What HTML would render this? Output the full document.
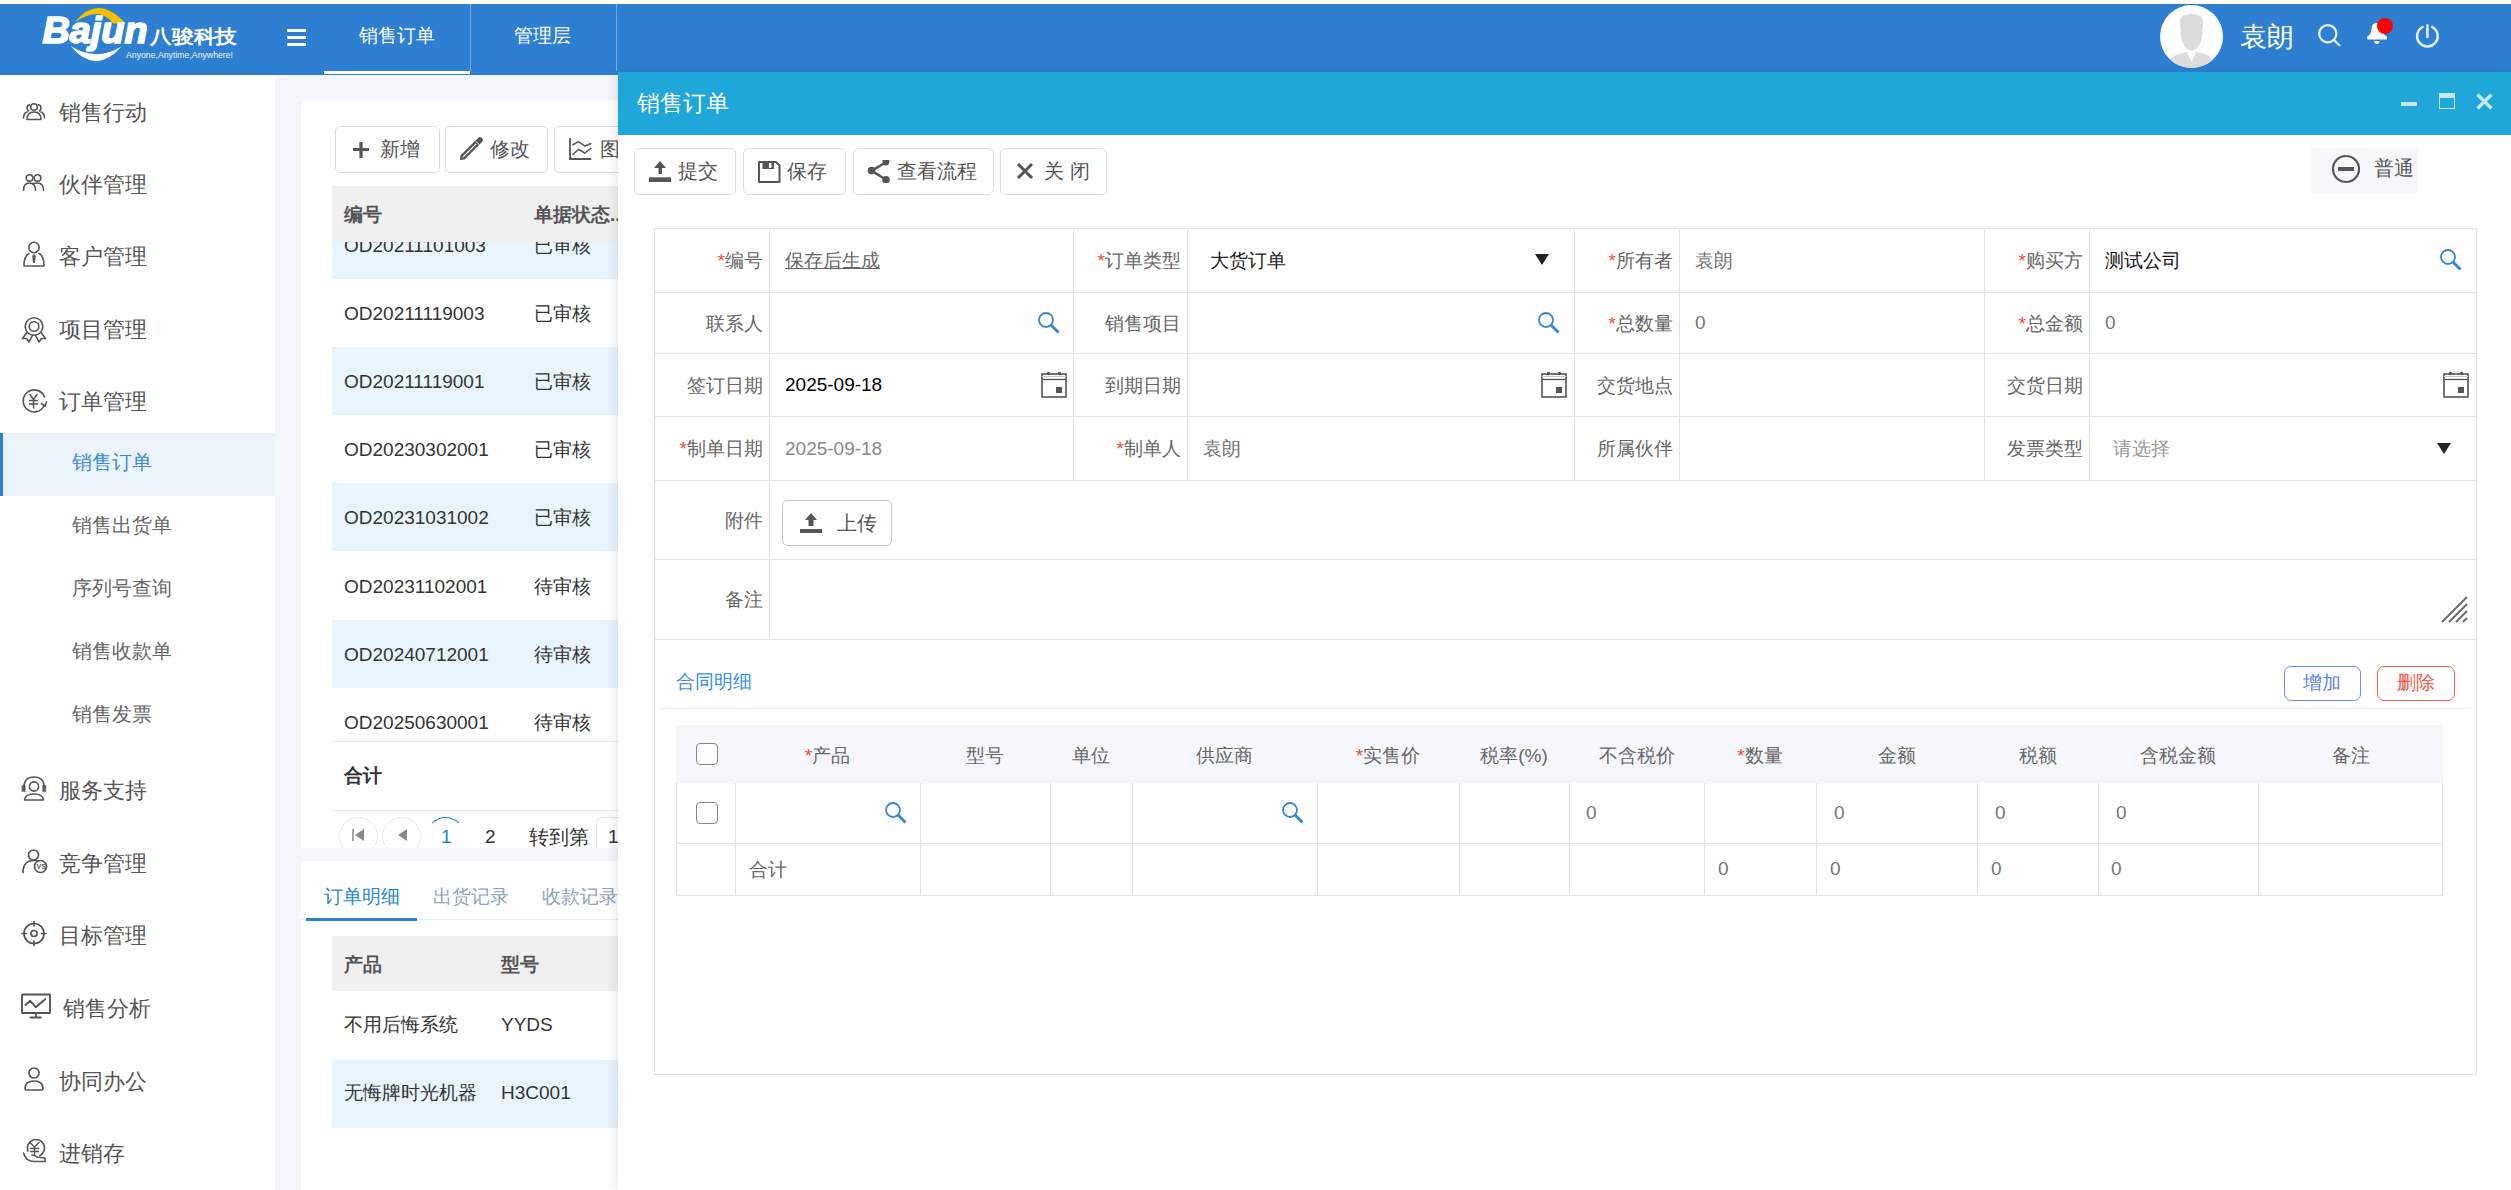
<!DOCTYPE html><html><head><meta charset="utf-8"><style>
html,body{margin:0;padding:0;width:2511px;height:1190px;overflow:hidden;background:#fff;font-family:"Liberation Sans", sans-serif;}
.r{position:absolute;box-sizing:border-box;}
.t{position:absolute;white-space:nowrap;}
</style></head><body>
<div class="r" style="left:0px;top:4px;width:2511px;height:71px;background:#2e7fd1"></div>
<svg class="r" style="left:0px;top:0px" width="260" height="75" viewBox="0 0 260 75">
<path d="M74.5 22.5 Q98 -7 125.6 23.5 L113 23.5 Q100 5 74.5 22.5 Z" fill="#f5c000"/>
<path d="M70.5 46 Q96 76 121.5 46.5 Q96 62 70.5 46 Z" fill="#fff"/>
<text x="42.5" y="43" font-family="Liberation Sans" font-weight="bold" font-style="italic" font-size="36" fill="#fff" stroke="#fff" stroke-width="1.6" textLength="105" lengthAdjust="spacingAndGlyphs">Bajun</text>
<text x="150" y="43" font-family="Liberation Sans" font-weight="bold" font-size="19" fill="#fff" textLength="87" lengthAdjust="spacingAndGlyphs">八骏科技</text>
<text x="126" y="58" font-family="Liberation Sans" font-size="9" fill="#f2f6fb" textLength="107" lengthAdjust="spacingAndGlyphs">Anyone,Anytime,Anywhere!</text>
</svg>
<div class="r" style="left:287px;top:29px;width:19px;height:2.5px;background:#fff"></div>
<div class="r" style="left:287px;top:36px;width:19px;height:2.5px;background:#fff"></div>
<div class="r" style="left:287px;top:43px;width:19px;height:2.5px;background:#fff"></div>
<div class="t " style="left:359px;top:17px;height:38px;line-height:38px;font-size:19px;color:#fff;font-weight:normal;">销售订单</div>
<div class="r" style="left:324px;top:71px;width:146px;height:3px;background:#fff"></div>
<div class="r" style="left:470px;top:4px;width:1px;height:67px;background:rgba(255,255,255,0.35)"></div>
<div class="t " style="left:514px;top:17px;height:38px;line-height:38px;font-size:19px;color:#fff;font-weight:normal;">管理层</div>
<div class="r" style="left:616px;top:4px;width:1px;height:67px;background:rgba(255,255,255,0.35)"></div>
<svg class="r" style="left:2160px;top:5px" width="63" height="63" viewBox="0 0 63 63">
<circle cx="31.5" cy="31.5" r="31.5" fill="#fff"/>
<clipPath id="avc"><circle cx="31.5" cy="31.5" r="31.5"/></clipPath>
<g clip-path="url(#avc)" fill="#dcdcdf">
<path d="M20 16 Q20 9 31.5 9 Q43 9 43 16 L42 32 Q40 44 31.5 46 Q23 44 21 32 Z"/>
<path d="M8 66 L10 56 Q12 50 22 48 L27 47 L31.5 57 L36 47 L41 48 Q51 50 53 56 L55 66 Z"/>
</g></svg>
<div class="t " style="left:2240px;top:10px;height:54px;line-height:54px;font-size:27px;color:#fff;font-weight:normal;">袁朗</div>
<svg class="r" style="left:2317px;top:23px" width="25" height="25" viewBox="0 0 25 25"><circle cx="10.8" cy="10.7" r="8.6" fill="none" stroke="#e8f0f8" stroke-width="2.3"/><line x1="17" y1="17" x2="23" y2="23" stroke="#e8f0f8" stroke-width="2.3"/></svg>
<svg class="r" style="left:2364px;top:18px" width="30" height="30" viewBox="0 0 30 30"><path d="M3.2 21.6 L23 21.6 L23 18.3 Q19.5 17.5 18.6 13 L18.2 10 Q17.6 5 12.8 5 Q8 5 7.6 10 L7.2 13 Q6.2 17.5 3.2 18.3 Z" fill="#fff"/><path d="M10.2 23 Q10.2 26 12.8 26 Q15.4 26 15.4 23 Z" fill="#fff"/><circle cx="21" cy="8" r="8" fill="#f00"/></svg>
<svg class="r" style="left:2414px;top:22px" width="26" height="26" viewBox="0 0 26 26"><path d="M8.6 5 A10.3 10.3 0 1 0 18.2 5" fill="none" stroke="#e8f0f8" stroke-width="2.5" stroke-linecap="round"/><line x1="13.4" y1="3.5" x2="13.4" y2="15" stroke="#e8f0f8" stroke-width="2.5" stroke-linecap="round"/></svg>
<div class="r" style="left:0px;top:75px;width:275px;height:1115px;background:#fff"></div>
<div class="t " style="left:59px;top:91px;height:44px;line-height:44px;font-size:22px;color:#555;font-weight:normal;">销售行动</div>
<div class="t " style="left:59px;top:163px;height:44px;line-height:44px;font-size:22px;color:#555;font-weight:normal;">伙伴管理</div>
<div class="t " style="left:59px;top:235px;height:44px;line-height:44px;font-size:22px;color:#555;font-weight:normal;">客户管理</div>
<div class="t " style="left:59px;top:308px;height:44px;line-height:44px;font-size:22px;color:#555;font-weight:normal;">项目管理</div>
<div class="t " style="left:59px;top:380px;height:44px;line-height:44px;font-size:22px;color:#555;font-weight:normal;">订单管理</div>
<div class="t " style="left:59px;top:769px;height:44px;line-height:44px;font-size:22px;color:#555;font-weight:normal;">服务支持</div>
<div class="t " style="left:59px;top:842px;height:44px;line-height:44px;font-size:22px;color:#555;font-weight:normal;">竞争管理</div>
<div class="t " style="left:59px;top:914px;height:44px;line-height:44px;font-size:22px;color:#555;font-weight:normal;">目标管理</div>
<div class="t " style="left:63px;top:987px;height:44px;line-height:44px;font-size:22px;color:#555;font-weight:normal;">销售分析</div>
<div class="t " style="left:59px;top:1060px;height:44px;line-height:44px;font-size:22px;color:#555;font-weight:normal;">协同办公</div>
<div class="t " style="left:59px;top:1132px;height:44px;line-height:44px;font-size:22px;color:#555;font-weight:normal;">进销存</div>
<svg class="r" style="left:22px;top:102px" width="24" height="19" viewBox="0 0 24 19"><g fill="none" stroke="#555" stroke-width="1.6" stroke-linecap="round" stroke-linejoin="round"><circle cx="12" cy="5" r="3.3"/><path d="M5 17.5 Q5 10 12 10 Q19 10 19 17.5 Z"/><path d="M7.5 2.8 Q5 3.2 5 6 Q5 8 6.5 9"/><path d="M16.5 2.8 Q19 3.2 19 6 Q19 8 17.5 9"/><path d="M1.5 16 Q1.5 11.5 5 10"/><path d="M22.5 16 Q22.5 11.5 19 10"/></g></svg>
<svg class="r" style="left:22px;top:173px" width="24" height="19" viewBox="0 0 24 19"><g fill="none" stroke="#555" stroke-width="1.6" stroke-linecap="round" stroke-linejoin="round"><circle cx="7.5" cy="5" r="3.3"/><circle cx="15.5" cy="5" r="3.3"/><path d="M1.5 17.5 Q1.5 10 7.5 10 Q13.5 10 13.5 17.5"/><path d="M11 10.6 Q13 10 15.5 10 Q21.5 10 21.5 17.5"/></g></svg>
<svg class="r" style="left:22px;top:241px" width="24" height="27" viewBox="0 0 24 27"><g fill="none" stroke="#555" stroke-width="1.6" stroke-linecap="round" stroke-linejoin="round"><circle cx="12" cy="6.5" r="5.2"/><path d="M7 12.5 Q2 15 2 25 L22 25 Q22 15 17 12.5"/><path d="M12 13.5 L13.2 15 L12.8 21 L12 22 L11.2 21 L10.8 15 Z" fill="#555" stroke-width="0.8"/></g></svg>
<svg class="r" style="left:21px;top:316px" width="26" height="27" viewBox="0 0 26 27"><g fill="none" stroke="#555" stroke-width="1.6" stroke-linecap="round" stroke-linejoin="round"><circle cx="13" cy="10.5" r="8.8"/><circle cx="13" cy="10.5" r="4.8"/><path d="M6 16.5 L1.5 22.5 L5.5 22.5 L8 26 L11.5 19.3"/><path d="M20 16.5 L24.5 22.5 L20.5 22.5 L18 26 L14.5 19.3"/></g></svg>
<svg class="r" style="left:21px;top:388px" width="27" height="26" viewBox="0 0 27 26"><g fill="none" stroke="#555" stroke-width="1.6" stroke-linecap="round" stroke-linejoin="round"><path d="M23.5 9 A11 11 0 1 0 23.2 17.5"/><path d="M20.5 15.5 L24 18.2 L25.5 14"/><path d="M9 6.5 L12.5 11.5 L16 6.5 M12.5 11.5 V20 M8.5 12.5 H16.5 M8.5 16 H16.5" stroke-width="1.5"/></g></svg>
<svg class="r" style="left:21px;top:775px" width="26" height="27" viewBox="0 0 26 27"><g fill="none" stroke="#555" stroke-width="1.6" stroke-linecap="round" stroke-linejoin="round"><path d="M3 12 Q3 2 13 2 Q23 2 23 12"/><rect x="1.2" y="10.5" width="3" height="6" fill="#555" stroke-width="0.5"/><rect x="21.8" y="10.5" width="3" height="6" fill="#555" stroke-width="0.5"/><circle cx="13" cy="11.5" r="4.6"/><path d="M3.5 25 Q4 19 13 19 Q22 19 22.5 25 Z"/></g></svg>
<svg class="r" style="left:21px;top:849px" width="27" height="26" viewBox="0 0 27 26"><g fill="none" stroke="#555" stroke-width="1.7" stroke-linecap="round" stroke-linejoin="round"><circle cx="12.5" cy="6" r="5"/><path d="M2 23.5 Q2 11.5 13 11.5 L16 11.5"/><circle cx="19.5" cy="17.5" r="6"/><text x="15.6" y="20" font-size="7" font-weight="bold" fill="#555" stroke="none" font-family="Liberation Sans">VS</text></g></svg>
<svg class="r" style="left:21px;top:921px" width="27" height="26" viewBox="0 0 27 26"><g fill="none" stroke="#555" stroke-width="1.7" stroke-linecap="round" stroke-linejoin="round"><circle cx="13" cy="12.5" r="10"/><circle cx="13" cy="12.5" r="3"/><path d="M13 0.5 V5 M13 20 V24.5 M1 12.5 H5.5 M20.5 12.5 H25"/></g></svg>
<svg class="r" style="left:21px;top:993px" width="31" height="27" viewBox="0 0 31 27"><g fill="none" stroke="#555" stroke-width="1.9" stroke-linecap="round" stroke-linejoin="round"><rect x="1" y="1.5" width="28" height="18.5" rx="0.5"/><path d="M4.5 12 L9.2 7.8 L14.8 14.2 L24.2 6.2"/><path d="M14.8 20 V24.5 M9.5 24.5 H20"/></g></svg>
<svg class="r" style="left:23px;top:1067px" width="22" height="24" viewBox="0 0 22 24"><g fill="none" stroke="#555" stroke-width="1.7" stroke-linecap="round" stroke-linejoin="round"><circle cx="11" cy="6" r="5"/><path d="M2 21.5 Q2 14 11 14 Q20 14 20 21.5 Q20 23 18.5 23 L3.5 23 Q2 23 2 21.5 Z"/></g></svg>
<svg class="r" style="left:22px;top:1138px" width="25" height="26" viewBox="0 0 25 26"><g fill="none" stroke="#555" stroke-width="1.7" stroke-linecap="round" stroke-linejoin="round"><path d="M6 13 A8.5 8.5 0 1 1 18 17.5"/><path d="M8 4.5 L12.5 9 L17 4.5 M12.5 9 V17 M8.5 10.5 H16.5 M8.5 13.5 H16.5" stroke-width="1.4"/><path d="M1.5 15 Q4 23.5 12 23.5 L23 23.5 L23 20 L15 19 Q13 17 10 17"/></g></svg>
<div class="r" style="left:0px;top:433px;width:275px;height:63px;background:#ebf3fb"></div>
<div class="r" style="left:0px;top:433px;width:3px;height:63px;background:#2e7fd1"></div>
<div class="t " style="left:72px;top:442px;height:40px;line-height:40px;font-size:20px;color:#3d8ad8;font-weight:normal;">销售订单</div>
<div class="t " style="left:72px;top:505px;height:40px;line-height:40px;font-size:20px;color:#666;font-weight:normal;">销售出货单</div>
<div class="t " style="left:72px;top:568px;height:40px;line-height:40px;font-size:20px;color:#666;font-weight:normal;">序列号查询</div>
<div class="t " style="left:72px;top:631px;height:40px;line-height:40px;font-size:20px;color:#666;font-weight:normal;">销售收款单</div>
<div class="t " style="left:72px;top:694px;height:40px;line-height:40px;font-size:20px;color:#666;font-weight:normal;">销售发票</div>
<div class="r" style="left:275px;top:75px;width:343px;height:1115px;background:#f4f6fb"></div>
<div class="r" style="left:301px;top:100px;width:330px;height:748px;background:#fff;border-radius:6px 0 0 0"></div>
<div class="r" style="left:335px;top:126px;width:104.5px;height:47px;border:1px solid #dcdcdc;border-radius:5px;background:#fff"></div>
<div class="r" style="left:445px;top:126px;width:103px;height:47px;border:1px solid #dcdcdc;border-radius:5px;background:#fff"></div>
<div class="r" style="left:554px;top:126px;width:106px;height:47px;border:1px solid #dcdcdc;border-radius:5px;background:#fff"></div>
<div class="t " style="left:380px;top:129px;height:40px;line-height:40px;font-size:20px;color:#555;font-weight:normal;">新增</div>
<div class="t " style="left:490px;top:129px;height:40px;line-height:40px;font-size:20px;color:#555;font-weight:normal;">修改</div>
<div class="t " style="left:600px;top:129px;height:40px;line-height:40px;font-size:20px;color:#555;font-weight:normal;">图表</div>
<svg class="r" style="left:352px;top:140.5px" width="18" height="18" viewBox="0 0 18 18"><path d="M9 1 V17 M1 8.5 H17" stroke="#555" stroke-width="3.2"/></svg>
<svg class="r" style="left:458px;top:136px" width="26" height="26" viewBox="0 0 26 26"><path d="M2.4 19.4 L17.4 4.4 L21.6 8.6 L6.6 23.6 Z" fill="#555"/><path d="M2.4 19.4 L2 24 L6.6 23.6 Z" fill="#555"/><line x1="5.2" y1="20.8" x2="18.2" y2="7.8" stroke="#fff" stroke-width="1.2"/><line x1="20.3" y1="5.7" x2="22" y2="4" stroke="#555" stroke-width="5.6" stroke-linecap="round"/><line x1="17" y1="4.4" x2="21.6" y2="9" stroke="#fff" stroke-width="0.9"/></svg>
<svg class="r" style="left:567px;top:137px" width="26" height="24" viewBox="0 0 26 24"><path d="M3 1 V22 H24.3" fill="none" stroke="#555" stroke-width="1.8"/><path d="M5.4 8 L11.5 4.7 L18 9.2 L24.3 6.2 M5.4 17.8 L11.7 12.5 L17.8 16 L24.3 11" fill="none" stroke="#555" stroke-width="1.5"/></svg>
<div class="r" style="left:332px;top:186px;width:300px;height:56px;background:#f0f0f0"></div>
<div class="t " style="left:344px;top:196px;height:38px;line-height:38px;font-size:19px;color:#555;font-weight:bold;">编号</div>
<div class="t " style="left:534px;top:196px;height:38px;line-height:38px;font-size:19px;color:#555;font-weight:bold;">单据状态..</div>
<div class="r" style="left:332px;top:242px;width:300px;height:499px;overflow:hidden">
<div class="r" style="left:0;top:0px;width:300px;height:36.69999999999999px;background:#e8f5fe"></div>
<div class="t" style="left:12px;top:-15.400000000000006px;line-height:38px;font-size:19px;color:#333">OD20211101003</div>
<div class="t" style="left:202px;top:-15.400000000000006px;line-height:38px;font-size:19px;color:#333">已审核</div>
<div class="t" style="left:12px;top:52.80000000000001px;line-height:38px;font-size:19px;color:#333">OD20211119003</div>
<div class="t" style="left:202px;top:52.80000000000001px;line-height:38px;font-size:19px;color:#333">已审核</div>
<div class="r" style="left:0;top:104.89999999999998px;width:300px;height:68.19999999999999px;background:#e8f5fe"></div>
<div class="t" style="left:12px;top:121.0px;line-height:38px;font-size:19px;color:#333">OD20211119001</div>
<div class="t" style="left:202px;top:121.0px;line-height:38px;font-size:19px;color:#333">已审核</div>
<div class="t" style="left:12px;top:189.20000000000005px;line-height:38px;font-size:19px;color:#333">OD20230302001</div>
<div class="t" style="left:202px;top:189.20000000000005px;line-height:38px;font-size:19px;color:#333">已审核</div>
<div class="r" style="left:0;top:241.3px;width:300px;height:68.19999999999999px;background:#e8f5fe"></div>
<div class="t" style="left:12px;top:257.4px;line-height:38px;font-size:19px;color:#333">OD20231031002</div>
<div class="t" style="left:202px;top:257.4px;line-height:38px;font-size:19px;color:#333">已审核</div>
<div class="t" style="left:12px;top:325.6px;line-height:38px;font-size:19px;color:#333">OD20231102001</div>
<div class="t" style="left:202px;top:325.6px;line-height:38px;font-size:19px;color:#333">待审核</div>
<div class="r" style="left:0;top:377.70000000000005px;width:300px;height:68.20000000000005px;background:#e8f5fe"></div>
<div class="t" style="left:12px;top:393.80000000000007px;line-height:38px;font-size:19px;color:#333">OD20240712001</div>
<div class="t" style="left:202px;top:393.80000000000007px;line-height:38px;font-size:19px;color:#333">待审核</div>
<div class="t" style="left:12px;top:462.0000000000001px;line-height:38px;font-size:19px;color:#333">OD20250630001</div>
<div class="t" style="left:202px;top:462.0000000000001px;line-height:38px;font-size:19px;color:#333">待审核</div>
</div>
<div class="r" style="left:332px;top:741px;width:300px;height:1px;background:#e5ecf3"></div>
<div class="t " style="left:344px;top:757px;height:38px;line-height:38px;font-size:19px;color:#333;font-weight:bold;">合计</div>
<div class="r" style="left:332px;top:810px;width:300px;height:1px;background:#e5ecf3"></div>
<div class="r" style="left:332px;top:811px;width:300px;height:37px;overflow:hidden">
<div class="r" style="left:7px;top:6px;width:39px;height:39px;border:1px solid #e3e9ef;border-radius:50%"></div>
<div class="r" style="left:50px;top:6px;width:39px;height:39px;border:1px solid #e3e9ef;border-radius:50%"></div>
<div class="r" style="left:94px;top:6px;width:39px;height:39px;border:1.5px solid transparent;border-top-color:#1e88c8;border-radius:50%"></div>
<svg class="r" style="left:20px;top:17px" width="14" height="14"><path d="M1 1 V13" stroke="#888" stroke-width="1.5"/><path d="M12 1 L3 7 L12 13 Z" fill="#888"/></svg>
<svg class="r" style="left:64px;top:17px" width="14" height="14"><path d="M11 1 L2 7 L11 13 Z" fill="#888"/></svg>
<div class="t" style="left:109px;top:6px;line-height:40px;font-size:19px;color:#1e88c8">1</div>
<div class="t" style="left:153px;top:6px;line-height:40px;font-size:19px;color:#333">2</div>
<div class="t" style="left:197px;top:6px;line-height:40px;font-size:20px;color:#333">转到第</div>
<div class="r" style="left:264px;top:6px;width:60px;height:40px;border:1px solid #dde3ea;border-radius:5px"></div>
<div class="t" style="left:276px;top:6px;line-height:40px;font-size:19px;color:#333">1</div>
</div>
<div class="r" style="left:301px;top:861px;width:330px;height:329px;background:#fff"></div>
<div class="t " style="left:324px;top:878px;height:38px;line-height:38px;font-size:19px;color:#1e88c8;font-weight:normal;">订单明细</div>
<div class="t " style="left:433px;top:878px;height:38px;line-height:38px;font-size:19px;color:#8aa4c0;font-weight:normal;">出货记录</div>
<div class="t " style="left:542px;top:878px;height:38px;line-height:38px;font-size:19px;color:#8aa4c0;font-weight:normal;">收款记录</div>
<div class="r" style="left:301px;top:919px;width:330px;height:1px;background:#e4edf6"></div>
<div class="r" style="left:306px;top:918px;width:111px;height:3px;background:#2e7fd1"></div>
<div class="r" style="left:332px;top:936px;width:300px;height:55px;background:#f0f0f0"></div>
<div class="t " style="left:344px;top:946px;height:38px;line-height:38px;font-size:19px;color:#555;font-weight:bold;">产品</div>
<div class="t " style="left:501px;top:946px;height:38px;line-height:38px;font-size:19px;color:#555;font-weight:bold;">型号</div>
<div class="t " style="left:344px;top:1006px;height:38px;line-height:38px;font-size:19px;color:#333;font-weight:normal;">不用后悔系统</div>
<div class="t " style="left:501px;top:1006px;height:38px;line-height:38px;font-size:19px;color:#333;font-weight:normal;">YYDS</div>
<div class="r" style="left:332px;top:1060px;width:300px;height:68px;background:#e8f5fe"></div>
<div class="t " style="left:344px;top:1074px;height:38px;line-height:38px;font-size:19px;color:#333;font-weight:normal;">无悔牌时光机器</div>
<div class="t " style="left:501px;top:1074px;height:38px;line-height:38px;font-size:19px;color:#333;font-weight:normal;">H3C001</div>
<div class="r" style="left:618px;top:72px;width:1893px;height:1118px;background:#fff;box-shadow:-3px 0 10px rgba(0,0,0,0.09)"></div>
<div class="r" style="left:618px;top:72px;width:1893px;height:63px;background:#20a7d9"></div>
<div class="t " style="left:637px;top:80px;height:46px;line-height:46px;font-size:23px;color:#fff;font-weight:normal;">销售订单</div>
<div class="r" style="left:2401px;top:102px;width:16px;height:4px;background:#c8e8f5"></div>
<div class="r" style="left:2439px;top:93px;width:16px;height:16px;border:1.8px solid #c8e8f5;border-top-width:5px"></div>
<svg class="r" style="left:2475px;top:92px" width="19" height="19" viewBox="0 0 19 19"><path d="M2.5 2.5 L16.5 16.5 M16.5 2.5 L2.5 16.5" stroke="#c8e8f5" stroke-width="3.4"/></svg>
<div class="r" style="left:634px;top:148px;width:102px;height:47px;border:1px solid #dedede;border-radius:6px;background:#fff"></div>
<div class="r" style="left:743px;top:148px;width:103px;height:47px;border:1px solid #dedede;border-radius:6px;background:#fff"></div>
<div class="r" style="left:853px;top:148px;width:141px;height:47px;border:1px solid #dedede;border-radius:6px;background:#fff"></div>
<div class="r" style="left:1000px;top:148px;width:107px;height:47px;border:1px solid #dedede;border-radius:6px;background:#fff"></div>
<div class="t " style="left:678px;top:151px;height:40px;line-height:40px;font-size:20px;color:#555;font-weight:normal;">提交</div>
<div class="t " style="left:787px;top:151px;height:40px;line-height:40px;font-size:20px;color:#555;font-weight:normal;">保存</div>
<div class="t " style="left:897px;top:151px;height:40px;line-height:40px;font-size:20px;color:#555;font-weight:normal;">查看流程</div>
<div class="t " style="left:1044px;top:151px;height:40px;line-height:40px;font-size:20px;color:#555;font-weight:normal;">关 闭</div>
<svg class="r" style="left:648px;top:159px" width="24" height="24" viewBox="0 0 24 24"><path d="M12 2 L18 9 H14 V15 H10.5 V9 H6 Z" fill="#555"/><rect x="1" y="18.3" width="22" height="4.7" fill="#555"/></svg>
<svg class="r" style="left:757px;top:159px" width="24" height="24" viewBox="0 0 24 24"><path d="M2 3 H19 L22.5 6.5 V23 H2 Z" fill="none" stroke="#555" stroke-width="2" stroke-linejoin="round"/><path d="M5.5 3 H17 V10 H5.5 Z M12 4 V9 H14.5 V4 Z" fill="#555" fill-rule="evenodd"/></svg>
<svg class="r" style="left:866px;top:159px" width="24" height="24" viewBox="0 0 24 24"><circle cx="5.5" cy="11.6" r="3.8" fill="#555"/><path d="M16.5 1 H23.5 Q23.5 6.5 20 6.5 Q16.5 6.5 16.5 3 Z" fill="#555"/><circle cx="20" cy="20.8" r="3.8" fill="#555"/><path d="M5.5 11.6 L19 4 M5.5 11.6 L20 20.8" stroke="#555" stroke-width="2.5"/></svg>
<svg class="r" style="left:1016px;top:162px" width="18" height="18" viewBox="0 0 18 18"><path d="M2 2 L16 16 M16 2 L2 16" stroke="#555" stroke-width="3"/></svg>
<div class="r" style="left:2311px;top:148px;width:107px;height:45px;background:#f7f8fa"></div>
<svg class="r" style="left:2331px;top:154px" width="30" height="30" viewBox="0 0 30 30"><circle cx="15" cy="15" r="13" fill="none" stroke="#555" stroke-width="2.2"/><rect x="7" y="13" width="16" height="4" fill="#555"/></svg>
<div class="t " style="left:2374px;top:147.5px;height:40px;line-height:40px;font-size:20px;color:#555;font-weight:normal;">普通</div>
<div class="r" style="left:654px;top:228px;width:1823px;height:847px;border:1px solid #e2e2e2"></div>
<div class="r" style="left:654px;top:292px;width:1822px;height:1px;background:#e2e2e2"></div>
<div class="r" style="left:654px;top:353px;width:1822px;height:1px;background:#e2e2e2"></div>
<div class="r" style="left:654px;top:416px;width:1822px;height:1px;background:#e2e2e2"></div>
<div class="r" style="left:654px;top:480px;width:1822px;height:1px;background:#e2e2e2"></div>
<div class="r" style="left:654px;top:559px;width:1822px;height:1px;background:#e2e2e2"></div>
<div class="r" style="left:654px;top:639px;width:1822px;height:1px;background:#e2e2e2"></div>
<div class="r" style="left:769px;top:228px;width:1px;height:411px;background:#e2e2e2"></div>
<div class="r" style="left:1073px;top:228px;width:1px;height:252px;background:#e2e2e2"></div>
<div class="r" style="left:1187px;top:228px;width:1px;height:252px;background:#e2e2e2"></div>
<div class="r" style="left:1574px;top:228px;width:1px;height:252px;background:#e2e2e2"></div>
<div class="r" style="left:1679px;top:228px;width:1px;height:252px;background:#e2e2e2"></div>
<div class="r" style="left:1984px;top:228px;width:1px;height:252px;background:#e2e2e2"></div>
<div class="r" style="left:2089px;top:228px;width:1px;height:252px;background:#e2e2e2"></div>
<div class="t" style="right:1748px;top:242.0px;line-height:38px;font-size:19px;color:#666"><span style="color:#f3482f">*</span>编号</div>
<div class="t" style="left:785px;top:241.5px;line-height:38px;font-size:19px;color:#666;text-decoration:underline">保存后生成</div>
<div class="t" style="right:1330px;top:242.0px;line-height:38px;font-size:19px;color:#666"><span style="color:#f3482f">*</span>订单类型</div>
<div class="t" style="left:1210px;top:241.5px;line-height:38px;font-size:19px;color:#222;">大货订单</div>
<div class="t" style="right:838px;top:242.0px;line-height:38px;font-size:19px;color:#666"><span style="color:#f3482f">*</span>所有者</div>
<div class="t" style="left:1695px;top:241.5px;line-height:38px;font-size:19px;color:#777;">袁朗</div>
<div class="t" style="right:428px;top:242.0px;line-height:38px;font-size:19px;color:#666"><span style="color:#f3482f">*</span>购买方</div>
<div class="t" style="left:2105px;top:241.5px;line-height:38px;font-size:19px;color:#111;">测试公司</div>
<div class="t" style="right:1748px;top:304.5px;line-height:38px;font-size:19px;color:#666">联系人</div>
<div class="t" style="right:1330px;top:304.5px;line-height:38px;font-size:19px;color:#666">销售项目</div>
<div class="t" style="right:838px;top:304.5px;line-height:38px;font-size:19px;color:#666"><span style="color:#f3482f">*</span>总数量</div>
<div class="t" style="left:1695px;top:304.0px;line-height:38px;font-size:19px;color:#777;">0</div>
<div class="t" style="right:428px;top:304.5px;line-height:38px;font-size:19px;color:#666"><span style="color:#f3482f">*</span>总金额</div>
<div class="t" style="left:2105px;top:304.0px;line-height:38px;font-size:19px;color:#777;">0</div>
<div class="t" style="right:1748px;top:366.5px;line-height:38px;font-size:19px;color:#666">签订日期</div>
<div class="t" style="left:785px;top:366.0px;line-height:38px;font-size:19px;color:#000;">2025-09-18</div>
<div class="t" style="right:1330px;top:366.5px;line-height:38px;font-size:19px;color:#666">到期日期</div>
<div class="t" style="right:838px;top:366.5px;line-height:38px;font-size:19px;color:#666">交货地点</div>
<div class="t" style="right:428px;top:366.5px;line-height:38px;font-size:19px;color:#666">交货日期</div>
<div class="t" style="right:1748px;top:430.0px;line-height:38px;font-size:19px;color:#666"><span style="color:#f3482f">*</span>制单日期</div>
<div class="t" style="left:785px;top:429.5px;line-height:38px;font-size:19px;color:#888;">2025-09-18</div>
<div class="t" style="right:1330px;top:430.0px;line-height:38px;font-size:19px;color:#666"><span style="color:#f3482f">*</span>制单人</div>
<div class="t" style="left:1203px;top:429.5px;line-height:38px;font-size:19px;color:#777;">袁朗</div>
<div class="t" style="right:838px;top:430.0px;line-height:38px;font-size:19px;color:#666">所属伙伴</div>
<div class="t" style="right:428px;top:430.0px;line-height:38px;font-size:19px;color:#666">发票类型</div>
<div class="t" style="left:2113px;top:429.5px;line-height:38px;font-size:19px;color:#999;">请选择</div>
<div class="t" style="right:1748px;top:501.5px;line-height:38px;font-size:19px;color:#666">附件</div>
<div class="t" style="right:1748px;top:581.0px;line-height:38px;font-size:19px;color:#666">备注</div>
<svg class="r" style="left:1038px;top:312px" width="22" height="22" viewBox="0 0 22 22"><circle cx="8" cy="8" r="7" fill="none" stroke="#3587d6" stroke-width="1.8"/><line x1="13" y1="13" x2="20.5" y2="20.5" stroke="#3587d6" stroke-width="3"/></svg>
<svg class="r" style="left:1538px;top:312px" width="22" height="22" viewBox="0 0 22 22"><circle cx="8" cy="8" r="7" fill="none" stroke="#3587d6" stroke-width="1.8"/><line x1="13" y1="13" x2="20.5" y2="20.5" stroke="#3587d6" stroke-width="3"/></svg>
<svg class="r" style="left:2440px;top:249px" width="22" height="22" viewBox="0 0 22 22"><circle cx="8" cy="8" r="7" fill="none" stroke="#3587d6" stroke-width="1.8"/><line x1="13" y1="13" x2="20.5" y2="20.5" stroke="#3587d6" stroke-width="3"/></svg>
<svg class="r" style="left:1041px;top:371px" width="26" height="27" viewBox="0 0 26 27"><rect x="1" y="3" width="24" height="23" fill="none" stroke="#4a4a4a" stroke-width="1.5"/><line x1="1" y1="8.5" x2="25" y2="8.5" stroke="#555" stroke-width="1.3"/><line x1="1" y1="5.5" x2="25" y2="5.5" stroke="#ccc" stroke-width="1"/><circle cx="7.5" cy="2.5" r="1.8" fill="#555"/><circle cx="18.5" cy="2.5" r="1.8" fill="#555"/><rect x="15" y="16" width="6" height="6" fill="#555"/></svg>
<svg class="r" style="left:1541px;top:371px" width="26" height="27" viewBox="0 0 26 27"><rect x="1" y="3" width="24" height="23" fill="none" stroke="#4a4a4a" stroke-width="1.5"/><line x1="1" y1="8.5" x2="25" y2="8.5" stroke="#555" stroke-width="1.3"/><line x1="1" y1="5.5" x2="25" y2="5.5" stroke="#ccc" stroke-width="1"/><circle cx="7.5" cy="2.5" r="1.8" fill="#555"/><circle cx="18.5" cy="2.5" r="1.8" fill="#555"/><rect x="15" y="16" width="6" height="6" fill="#555"/></svg>
<svg class="r" style="left:2443px;top:371px" width="26" height="27" viewBox="0 0 26 27"><rect x="1" y="3" width="24" height="23" fill="none" stroke="#4a4a4a" stroke-width="1.5"/><line x1="1" y1="8.5" x2="25" y2="8.5" stroke="#555" stroke-width="1.3"/><line x1="1" y1="5.5" x2="25" y2="5.5" stroke="#ccc" stroke-width="1"/><circle cx="7.5" cy="2.5" r="1.8" fill="#555"/><circle cx="18.5" cy="2.5" r="1.8" fill="#555"/><rect x="15" y="16" width="6" height="6" fill="#555"/></svg>
<svg class="r" style="left:1535px;top:254px" width="14" height="11" viewBox="0 0 14 11"><path d="M0 0 H14 L7 11 Z" fill="#222"/></svg>
<svg class="r" style="left:2437px;top:443px" width="14" height="11" viewBox="0 0 14 11"><path d="M0 0 H14 L7 11 Z" fill="#222"/></svg>
<div class="r" style="left:782px;top:500px;width:110px;height:46px;border:1px solid #b9c7d8;border-radius:5px;background:#fff"></div>
<svg class="r" style="left:799px;top:511px" width="24" height="24" viewBox="0 0 24 24"><path d="M12 2 L18 9 H14.5 V15 H9.5 V9 H6 Z" fill="#555"/><rect x="1" y="18" width="22" height="4" fill="#555"/></svg>
<div class="t " style="left:837px;top:503px;height:40px;line-height:40px;font-size:20px;color:#555;font-weight:normal;">上传</div>
<svg class="r" style="left:2441px;top:596px" width="27" height="27" viewBox="0 0 27 27"><path d="M1 26 L26 1 M8 26 L26 8 M15 26 L26 15 M22 26 L26 22" stroke="#666" stroke-width="1.8"/></svg>
<div class="t " style="left:676px;top:663px;height:38px;line-height:38px;font-size:19px;color:#3a8ee6;font-weight:normal;">合同明细</div>
<div class="r" style="left:2284px;top:666px;width:77px;height:35px;border:1px solid #6b8ff0;border-radius:7px"></div>
<div class="t " style="left:2303px;top:664px;height:38px;line-height:38px;font-size:19px;color:#5b7ff0;font-weight:normal;">增加</div>
<div class="r" style="left:2377px;top:666px;width:78px;height:35px;border:1px solid #f5604c;border-radius:7px"></div>
<div class="t " style="left:2397px;top:664px;height:38px;line-height:38px;font-size:19px;color:#f5533d;font-weight:normal;">删除</div>
<div class="r" style="left:660px;top:708px;width:1811px;height:1px;background:#e8edf4"></div>
<div class="r" style="left:676px;top:725px;width:1767px;height:58px;background:#f5f7fc"></div>
<div class="r" style="left:676px;top:783px;width:1px;height:113px;background:#e2e2e2"></div>
<div class="r" style="left:2442px;top:783px;width:1px;height:113px;background:#e2e2e2"></div>
<div class="r" style="left:735px;top:783px;width:1px;height:113px;background:#e2e2e2"></div>
<div class="r" style="left:920px;top:783px;width:1px;height:113px;background:#e2e2e2"></div>
<div class="r" style="left:1050px;top:783px;width:1px;height:113px;background:#e2e2e2"></div>
<div class="r" style="left:1132px;top:783px;width:1px;height:113px;background:#e2e2e2"></div>
<div class="r" style="left:1317px;top:783px;width:1px;height:113px;background:#e2e2e2"></div>
<div class="r" style="left:1459px;top:783px;width:1px;height:113px;background:#e2e2e2"></div>
<div class="r" style="left:1569px;top:783px;width:1px;height:113px;background:#e2e2e2"></div>
<div class="r" style="left:1704px;top:783px;width:1px;height:113px;background:#e2e2e2"></div>
<div class="r" style="left:1816px;top:783px;width:1px;height:113px;background:#e2e2e2"></div>
<div class="r" style="left:1977px;top:783px;width:1px;height:113px;background:#e2e2e2"></div>
<div class="r" style="left:2098px;top:783px;width:1px;height:113px;background:#e2e2e2"></div>
<div class="r" style="left:2258px;top:783px;width:1px;height:113px;background:#e2e2e2"></div>
<div class="r" style="left:676px;top:843px;width:1767px;height:1px;background:#e2e2e2"></div>
<div class="r" style="left:676px;top:895px;width:1767px;height:1px;background:#e2e2e2"></div>
<div class="t" style="left:727.5px;width:200px;text-align:center;top:736.5px;line-height:38px;font-size:19px;color:#666"><span style="color:#f3482f">*</span>产品</div>
<div class="t" style="left:885.0px;width:200px;text-align:center;top:736.5px;line-height:38px;font-size:19px;color:#666">型号</div>
<div class="t" style="left:991.0px;width:200px;text-align:center;top:736.5px;line-height:38px;font-size:19px;color:#666">单位</div>
<div class="t" style="left:1124.5px;width:200px;text-align:center;top:736.5px;line-height:38px;font-size:19px;color:#666">供应商</div>
<div class="t" style="left:1288.0px;width:200px;text-align:center;top:736.5px;line-height:38px;font-size:19px;color:#666"><span style="color:#f3482f">*</span>实售价</div>
<div class="t" style="left:1414.0px;width:200px;text-align:center;top:736.5px;line-height:38px;font-size:19px;color:#666">税率(%)</div>
<div class="t" style="left:1536.5px;width:200px;text-align:center;top:736.5px;line-height:38px;font-size:19px;color:#666">不含税价</div>
<div class="t" style="left:1660.0px;width:200px;text-align:center;top:736.5px;line-height:38px;font-size:19px;color:#666"><span style="color:#f3482f">*</span>数量</div>
<div class="t" style="left:1796.5px;width:200px;text-align:center;top:736.5px;line-height:38px;font-size:19px;color:#666">金额</div>
<div class="t" style="left:1937.5px;width:200px;text-align:center;top:736.5px;line-height:38px;font-size:19px;color:#666">税额</div>
<div class="t" style="left:2078.0px;width:200px;text-align:center;top:736.5px;line-height:38px;font-size:19px;color:#666">含税金额</div>
<div class="t" style="left:2250.5px;width:200px;text-align:center;top:736.5px;line-height:38px;font-size:19px;color:#666">备注</div>
<div class="r" style="left:696px;top:743px;width:22px;height:22px;border:1.5px solid #888;border-radius:4px;background:#fff"></div>
<div class="r" style="left:696px;top:802px;width:22px;height:22px;border:1.5px solid #888;border-radius:4px;background:#fff"></div>
<svg class="r" style="left:884.5px;top:802px" width="22" height="22" viewBox="0 0 22 22"><circle cx="8" cy="8" r="7" fill="none" stroke="#3587d6" stroke-width="1.8"/><line x1="13" y1="13" x2="20.5" y2="20.5" stroke="#3587d6" stroke-width="3"/></svg>
<svg class="r" style="left:1281.5px;top:802px" width="22" height="22" viewBox="0 0 22 22"><circle cx="8" cy="8" r="7" fill="none" stroke="#3587d6" stroke-width="1.8"/><line x1="13" y1="13" x2="20.5" y2="20.5" stroke="#3587d6" stroke-width="3"/></svg>
<div class="t " style="left:1586px;top:794px;height:38px;line-height:38px;font-size:19px;color:#777;font-weight:normal;">0</div>
<div class="t " style="left:1834px;top:794px;height:38px;line-height:38px;font-size:19px;color:#777;font-weight:normal;">0</div>
<div class="t " style="left:1995px;top:794px;height:38px;line-height:38px;font-size:19px;color:#777;font-weight:normal;">0</div>
<div class="t " style="left:2116px;top:794px;height:38px;line-height:38px;font-size:19px;color:#777;font-weight:normal;">0</div>
<div class="t " style="left:749px;top:851px;height:38px;line-height:38px;font-size:19px;color:#666;font-weight:normal;">合计</div>
<div class="t " style="left:1718px;top:850px;height:38px;line-height:38px;font-size:19px;color:#777;font-weight:normal;">0</div>
<div class="t " style="left:1830px;top:850px;height:38px;line-height:38px;font-size:19px;color:#777;font-weight:normal;">0</div>
<div class="t " style="left:1991px;top:850px;height:38px;line-height:38px;font-size:19px;color:#777;font-weight:normal;">0</div>
<div class="t " style="left:2111px;top:850px;height:38px;line-height:38px;font-size:19px;color:#777;font-weight:normal;">0</div>
</body></html>
